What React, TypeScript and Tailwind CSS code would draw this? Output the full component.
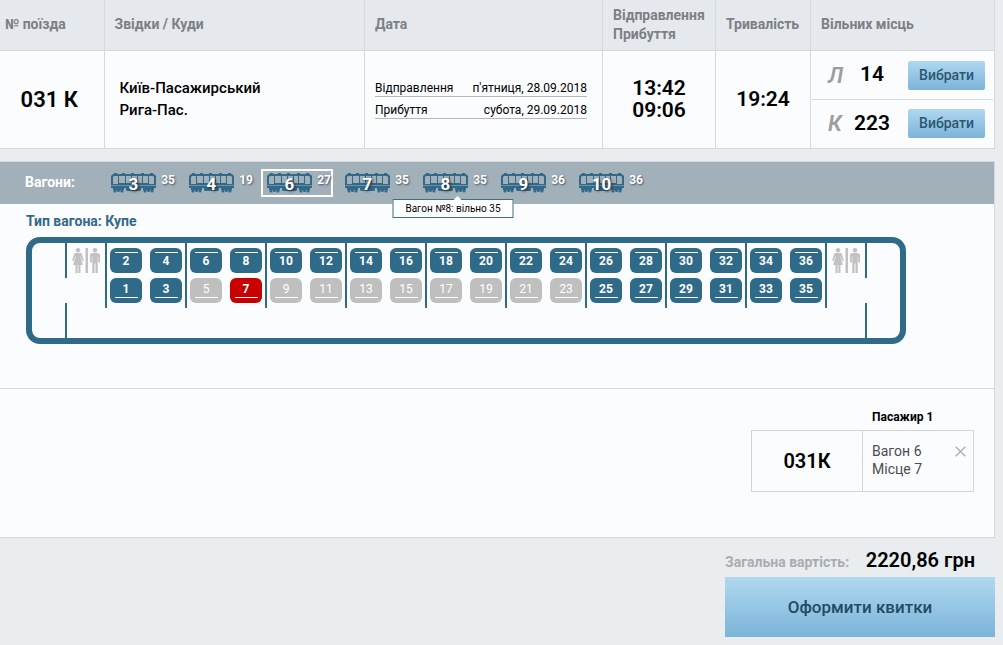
import React, { useState } from 'react';
import clsx from 'clsx';

interface Wagon {
  num: number;
  free: number;
}

const WAGONS: Wagon[] = [
  { num: 3, free: 35 },
  { num: 4, free: 19 },
  { num: 6, free: 27 },
  { num: 7, free: 35 },
  { num: 8, free: 35 },
  { num: 9, free: 36 },
  { num: 10, free: 36 },
];

const TAKEN = [5, 9, 11, 13, 15, 17, 19, 21, 23];
const COMPARTMENTS = [0, 1, 2, 3, 4, 5, 6, 7, 8];

const PLACES = [
  { type: 'Л', count: 14 },
  { type: 'К', count: 223 },
];

function WagonIcon() {
  return (
    <svg viewBox="0 0 45 20" className="h-5 w-[45px]" fill="#336988" aria-hidden="true">
      <path d="M3 0h3v1H3zM11 0h3v1h-3zM20 0h3v1h-3zM30 0h3v1h-3zM39 0h3v1h-3z" />
      <path
        fillRule="evenodd"
        d="M2 1h41l2 2v12H0V3zM2 4v7h5V3H3zM8 3v7h6V3zM15 3v7h5V3zM21 3v7h5V3zM27 3v7h4V3zM32 3v7h5V3zM38 3v8h5V4L42 3z"
      />
      <path d="M15 14h15v3l-1 1H16l-1-1z" />
      <path d="M2 15h11v2H2zM32 15h11v2H32z" />
      <path d="M0 12h45v1H0z" fill="#6f91a5" />
      <circle cx="4" cy="18" r="1.600" />
      <circle cx="7.500" cy="17.500" r="1.600" />
      <circle cx="11" cy="18" r="1.600" />
      <circle cx="34" cy="18" r="1.600" />
      <circle cx="37.500" cy="17.500" r="1.600" />
      <circle cx="41" cy="18" r="1.600" />
    </svg>
  );
}

function ToiletIcon() {
  return (
    <svg viewBox="0 0 28 25" className="h-[25px] w-7" fill="#c1c1c1" role="img" aria-label="WC">
      <circle cx="6" cy="2.200" r="2.200" />
      <path d="M4 5h4c1 0 1.600.4 1.900 1.300l2 6.400-1.500.5L8.700 8.200 8.500 9l2.300 8H8.500v8H6.400v-8h-.8v8H3.500v-8H1.200l2.300-8-.2-.8-1.700 5-1.500-.5 2-6.400C2.400 5.400 3 5 4 5z" />
      <path d="M13.500 0h2.500v25h-2.500z" />
      <circle cx="23" cy="2.200" r="2.200" />
      <path d="M20.500 5h5c1.500 0 2.500 1 2.500 2.500v7h-1.800V8.500h-.5V25h-2.200V15.500h-1V25h-2.200V8.500h-.5v6H18v-7C18 6 19 5 20.500 5z" />
    </svg>
  );
}

interface SeatProps {
  num: number;
  selected: boolean;
  onSelect: (num: number) => void;
}

function Seat({ num, selected, onSelect }: SeatProps) {
  const taken = TAKEN.includes(num);
  const upper = num % 2 === 0;

  return (
    <button
      type="button"
      disabled={taken}
      aria-pressed={selected}
      onClick={() => onSelect(num)}
      className={clsx(
        'flex h-[25px] w-8 items-center rounded-md px-1 text-[12px] leading-4 text-white',
        upper ? 'flex-col-reverse justify-end pt-1' : 'flex-col justify-end pb-[5px]',
        taken ? 'bg-[#bfbfbf] font-normal' : 'font-bold',
        !taken && (selected ? 'bg-[#c80000]' : 'bg-[#2f6a89]')
      )}
    >
      <span>{num}</span>
      <span className="h-px w-[23px] bg-white" />
    </button>
  );
}

// Vestibule wall with a door opening in the middle
function Wall() {
  return (
    <div className="flex h-[95px] w-0.5 flex-col justify-between">
      <div className="h-[35px] bg-[#2f6a89]" />
      <div className="h-[35px] bg-[#2f6a89]" />
    </div>
  );
}

export default function App() {
  const [wagon, setWagon] = useState(6);
  const [seat, setSeat] = useState(7);

  return (
    <div className="min-h-screen bg-[#e9edf0] pr-2 pb-2 font-['Roboto',sans-serif] text-black">
      <table className="w-full table-fixed border-collapse bg-[#fafcfe]">
        <colgroup>
          <col className="w-[104px]" />
          <col />
          <col className="w-[238px]" />
          <col className="w-[113px]" />
          <col className="w-[95px]" />
          <col className="w-[184px]" />
        </colgroup>
        <thead>
          <tr className="h-[50px] border-b border-[#d3d9dd] bg-[#e5e8ed] text-left text-[14px] leading-[19px] text-[#7c8084]">
            <th className="border-r border-[#d3d9dd] pl-[5px] font-bold">№ поїзда</th>
            <th className="border-r border-[#d3d9dd] pl-[10px] font-bold">Звідки / Куди</th>
            <th className="border-r border-[#d3d9dd] pl-[10px] font-bold">Дата</th>
            <th className="border-r border-[#d3d9dd] pl-[10px] font-bold">
              Відправлення
              <br />
              Прибуття
            </th>
            <th className="border-r border-[#d3d9dd] pl-[10px] font-bold">Тривалість</th>
            <th className="border-r border-[#d3d9dd] pl-[10px] font-bold">Вільних місць</th>
          </tr>
        </thead>
        <tbody>
          <tr className="h-[98px] border-b border-[#d3d9dd]">
            <td className="border-r border-[#d3d9dd] pr-[5px] text-center text-[22px] font-semibold">031 К</td>
            <td className="border-r border-[#d3d9dd] pl-[15px] text-[15px] leading-[22px] font-medium">
              Київ-Пасажирський
              <br />
              Рига-Пас.
            </td>
            <td className="border-r border-[#d3d9dd] pt-0.5 pr-[15px] pl-[10px] text-[12px] leading-[15px]">
              <div className="flex justify-between border-b border-[#b4b8bb]">
                <span>Відправлення</span>
                <span>п'ятниця, 28.09.2018</span>
              </div>
              <div className="mt-1.5 flex justify-between border-b border-[#b4b8bb]">
                <span>Прибуття</span>
                <span>субота, 29.09.2018</span>
              </div>
            </td>
            <td className="border-r border-[#d3d9dd] text-center text-[21px] leading-[22px] font-semibold">
              13:42
              <br />
              09:06
            </td>
            <td className="border-r border-[#d3d9dd] pt-0.5 text-center text-[21px] font-semibold">19:24</td>
            <td className="border-r border-[#d3d9dd] px-px">
              {PLACES.map((place, i) => (
                <div
                  key={place.type}
                  className={clsx(
                    'flex h-12 items-center pr-2 pl-4',
                    i > 0 && 'border-t border-[#d3d9dd]'
                  )}
                >
                  <span className="w-5 text-[22px] font-semibold text-[#9a9ea1] italic">{place.type}</span>
                  <span className="w-12 text-center text-[21px] font-semibold">{place.count}</span>
                  <button
                    type="button"
                    className="ml-auto h-[29px] w-[77px] rounded-xs bg-linear-to-b from-[#b0d8ef] to-[#7bb4d8] text-[14px] font-medium text-[#2c5672]"
                  >
                    Вибрати
                  </button>
                </div>
              ))}
            </td>
          </tr>
        </tbody>
      </table>

      <main className="mt-3 border-t border-r border-b border-[#d3d9dd] bg-[#fafcfe]">
        <div className="flex h-[42px] items-center bg-[#a2b0b9] pl-[25px]">
          <span className="w-20 text-[14px] font-bold text-white">Вагони:</span>
          <div className="flex gap-1.5">
            {WAGONS.map(({ num, free }) => (
              <button
                key={num}
                type="button"
                aria-pressed={wagon === num}
                onClick={() => setWagon(num)}
                className={clsx(
                  'relative flex h-7 w-[72px] items-start justify-between border-2 pt-0.5 pl-1 text-[12px] font-bold text-white',
                  wagon === num ? 'border-white' : 'border-transparent'
                )}
              >
                <span className="grid">
                  <span className="col-start-1 row-start-1">
                    <WagonIcon />
                  </span>
                  <span className="col-start-1 row-start-1 text-[17px] leading-[22px] [text-shadow:1px_1px_3px_#123]">
                    {num}
                  </span>
                </span>
                <span className="leading-[14px] [text-shadow:1px_1px_2px_#456]">{free}</span>
                {num === 8 && (
                  <span
                    role="tooltip"
                    className="absolute top-full left-1/2 z-10 mt-1 h-[19px] w-[121px] -translate-x-1/2 border border-[#3f6e87] bg-white text-center text-[10px] leading-[18px] font-normal text-black"
                  >
                    <svg viewBox="0 0 8 4" className="absolute bottom-full left-[60px] h-1 w-2">
                      <path d="M0 4l4-4 4 4z" fill="#fff" />
                    </svg>
                    Вагон №8: вільно 35
                  </span>
                )}
              </button>
            ))}
          </div>
        </div>

        <section className="h-[185px] border-b border-[#d3d9dd] pt-2 pl-[26px]">
          <h2 className="text-[14px] leading-[18px] font-bold text-[#336988]">Тип вагона: Купе</h2>
          <div className="mt-[7px] flex w-[880px] justify-center rounded-[14px] border-6 border-[#2f6a89]">
            <Wall />
            <div className="flex w-[38px] justify-center pt-[5px]">
              <ToiletIcon />
            </div>
            {COMPARTMENTS.map(c => (
              <div
                key={c}
                className="grid h-[65px] w-20 grid-cols-[32px_32px] content-start gap-x-2 gap-y-[5px] border-l-2 border-[#2f6a89] pt-[5px] pl-[3px]"
              >
                {[2, 4, 1, 3].map(n => {
                  const num = c * 4 + n;
                  return <Seat key={num} num={num} selected={seat === num} onSelect={setSeat} />;
                })}
              </div>
            ))}
            <div className="flex h-[65px] w-10 justify-center border-l-2 border-[#2f6a89] pt-[5px]">
              <ToiletIcon />
            </div>
            <Wall />
          </div>
        </section>

        <section className="flex h-[148px] flex-col items-end pt-5 pr-5">
          <div className="w-[223px]">
            <p className="pl-[121px] text-[12px] leading-4 font-bold">Пасажир 1</p>
            <div className="mt-[5px] flex h-[62px] border border-[#d3d5da]">
              <div className="flex w-[111px] items-center justify-center border-r border-[#d3d5da] text-[20px] font-semibold">
                031К
              </div>
              <div className="flex flex-1 items-start justify-between pt-[11px] pr-[7px] pl-[9px] text-[14px] leading-[18px] text-[#4a4c50]">
                <p>
                  Вагон {wagon}
                  <br />
                  Місце {seat}
                </p>
                <button type="button" aria-label="Видалити" className="mt-1">
                  <svg viewBox="0 0 11 11" className="size-[11px]" stroke="#aeb0b3" strokeWidth={1.4}>
                    <path d="M.7.7l9.600 9.600M10.300.7L.7 10.300" />
                  </svg>
                </button>
              </div>
            </div>
          </div>
        </section>
      </main>

      <footer className="flex flex-col items-end pt-2">
        <div className="w-[270px]">
          <div className="flex items-baseline justify-between pr-5 leading-[29px]">
            <span className="text-[14px] font-bold text-[#a9acaf]">Загальна вартість:</span>
            <span className="text-[20px] font-semibold">2220,86 грн</span>
          </div>
          <button
            type="button"
            className="h-[60px] w-full bg-linear-to-b from-[#b0d8ef] to-[#7bb4d8] pt-0.5 text-[17px] font-medium text-[#234b66]"
          >
            Оформити квитки
          </button>
        </div>
      </footer>
    </div>
  );
}
